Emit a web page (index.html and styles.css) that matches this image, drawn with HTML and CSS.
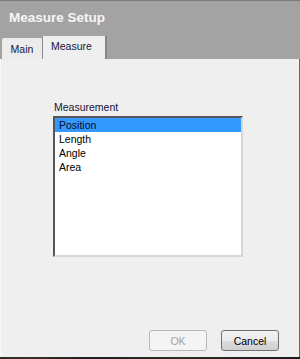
FILE: index.html
```html
<!DOCTYPE html>
<html>
<head>
<meta charset="utf-8">
<link rel="stylesheet" href="styles.css">
</head>
<body>
<div class="window">
  <div class="header">
    <div class="title">Measure Setup</div>
    <div class="tabs">
      <div class="tab">Main</div>
      <div class="tab active">Measure</div>
    </div>
  </div>
  <div class="content">
    <div class="field">
      <div class="label">Measurement</div>
      <ul class="list">
        <li class="item selected">Position</li>
        <li class="item">Length</li>
        <li class="item">Angle</li>
        <li class="item">Area</li>
      </ul>
    </div>
    <div class="buttons">
      <button class="btn disabled" disabled>OK</button>
      <button class="btn">Cancel</button>
    </div>
  </div>
  <div class="desktop"></div>
</div>
</body>
</html>
```

FILE: styles.css
```css
html, body {
  margin: 0;
  padding: 0;
}
body {
  width: 300px;
  height: 359px;
  overflow: hidden;
  font-family: "Liberation Sans", Arial, sans-serif;
  font-size: 10.5px;
}
.window {
  display: flex;
  flex-direction: column;
  width: 300px;
  height: 359px;
}
.header {
  height: 58px;
  border-top: 1px solid #7a7a7a;
  background: #a3a3a3;
  display: flex;
  flex-direction: column;
}
.title {
  padding: 9px 0 0 9px;
  font-size: 13.5px;
  line-height: 16px;
  font-weight: bold;
  color: #f6f6f6;
}
.tabs {
  margin-top: auto;
  display: flex;
  align-items: flex-end;
  padding-left: 2px;
}
.tab {
  box-sizing: border-box;
  width: 41px;
  height: 21px;
  padding-top: 5px;
  text-align: center;
  line-height: 13px;
  color: #14143c;
  background: #ececec;
  border-right: 1px solid #8c8c8c;
  border-radius: 2px 2px 0 0;
}
.tab.active {
  width: 64px;
  height: 23px;
  padding: 4px 0 0 8px;
  text-align: left;
  background: #efefef;
  border-right: 2px solid #858585;
  border-radius: 1px 1px 0 0;
}
.content {
  flex: 1;
  display: flex;
  flex-direction: column;
  background: #efefef;
  border-left: 1px solid #f9f9f9;
  border-right: 1px solid #6a6a6a;
  padding: 42px 20px 6px 52px;
}
.field {
  display: flex;
  flex-direction: column;
}
.label {
  line-height: 13px;
  color: #14143c;
  padding-left: 1px;
  margin-bottom: 2px;
}
.list {
  list-style: none;
  margin: 0;
  padding: 0;
  width: 186px;
  height: 137px;
  background: #fff;
  border-style: solid;
  border-width: 2px;
  border-color: #555 #d6d6d6 #d6d6d6 #555;
}
.item {
  height: 14px;
  line-height: 14px;
  padding-left: 4px;
  color: #000;
}
.item.selected {
  background: #3399ff;
  color: #0a0a28;
}
.buttons {
  margin-top: auto;
  display: flex;
  justify-content: flex-end;
  gap: 14px;
}
.btn {
  box-sizing: border-box;
  width: 58px;
  height: 21px;
  padding: 0;
  font-family: "Liberation Sans", Arial, sans-serif;
  font-size: 10.5px;
  color: #000;
  border: 1px solid #707070;
  border-radius: 3px;
  background: linear-gradient(#f2f2f2, #ebebeb 50%, #dddddd 50%, #cfcfcf);
}
.btn.disabled {
  color: #a0a0a0;
  border-color: #b8b8b8;
  background: #f4f4f4;
}
.desktop {
  height: 2px;
  background: linear-gradient(to right, #2e2a26, #3a2e28 10%, #1e2020 30%, #2c2e28 60%, #1a1a1c);
}
```
